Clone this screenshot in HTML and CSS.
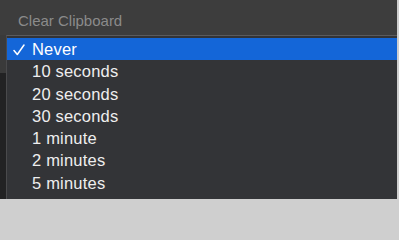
FILE: index.html
```html
<!DOCTYPE html>
<html>
<head>
<meta charset="utf-8">
<link rel="stylesheet" href="styles.css">
</head>
<body>
<div class="frame">
  <div class="window">
    <div class="label">Clear Clipboard</div>
    <div class="lower">
      <div class="side">
        <div class="side-top"></div>
        <div class="side-bottom"></div>
      </div>
      <div class="menu">
        <div class="item selected"><span class="check"><svg width="12" height="12" viewBox="0 0 12 12"><path d="M1 6.5 L4.3 10.5 L11 1" fill="none" stroke="#ffffff" stroke-width="1.5" stroke-linecap="round" stroke-linejoin="round"/></svg></span><span>Never</span></div>
        <div class="item"><span class="check"></span><span>10 seconds</span></div>
        <div class="item"><span class="check"></span><span>20 seconds</span></div>
        <div class="item"><span class="check"></span><span>30 seconds</span></div>
        <div class="item"><span class="check"></span><span>1 minute</span></div>
        <div class="item"><span class="check"></span><span>2 minutes</span></div>
        <div class="item"><span class="check"></span><span>5 minutes</span></div>
      </div>
    </div>
  </div>
</div>
</body>
</html>
```
FILE: styles.css
```css
html, body {
  margin: 0;
  padding: 0;
}
html {
  background: #cfcfcf;
}
body {
  width: 399px;
  height: 201px;
  overflow: hidden;
  background: #cfcfcf;
  font-family: "Liberation Sans", Arial, sans-serif;
}
.frame {
  width: 397px;
  height: 199px;
  overflow: hidden;
}
.window {
  width: 397px;
  height: 199px;
  background: #3d3d3d;
  display: flex;
  flex-direction: column;
}
.label {
  height: 35px;
  box-sizing: border-box;
  padding: 12px 0 0 18px;
  font-size: 15px;
  line-height: 17px;
  color: #8b8b8b;
}
.lower {
  flex: 1;
  display: flex;
  min-height: 0;
}
.side {
  width: 6px;
  display: flex;
  flex-direction: column;
}
.side-top {
  height: 38px;
  background: #3a3a3a;
}
.side-bottom {
  flex: 1;
  background: #222223;
}
.menu {
  flex: 1;
  background: #333437;
  border-top: 1px solid #5b5b5d;
  border-left: 1px solid #4a4a4c;
  padding: 2px 0 5px 0;
  box-sizing: border-box;
  display: flex;
  flex-direction: column;
}
.item {
  height: 22.25px;
  display: flex;
  align-items: center;
  padding-top: 1px;
  box-sizing: border-box;
  color: #eeeeee;
  font-size: 16.5px;
  letter-spacing: 0.2px;
}
.item.selected {
  background: #1466d8;
  color: #ffffff;
}
.check {
  width: 25px;
  padding-left: 6px;
  box-sizing: border-box;
  display: flex;
  align-items: center;
}
```
